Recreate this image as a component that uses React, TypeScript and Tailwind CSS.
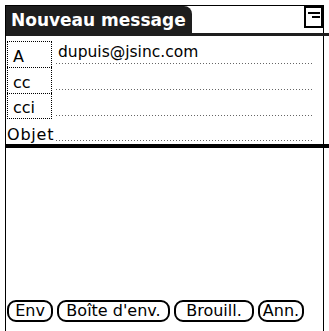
const font = { fontFamily: '"DejaVu Sans", Verdana, sans-serif' };

function DottedRule() {
  return (
    <div className="h-px w-full bg-[linear-gradient(to_right,#666_1px,transparent_1px)] bg-[length:3px_1px] bg-repeat-x" />
  );
}

function MenuIcon() {
  return (
    <svg width="19" height="22" viewBox="0 0 19 22" className="shrink-0 block">
      <rect x="1" y="1" width="17" height="20" fill="white" stroke="black" strokeWidth="2" />
      <rect x="4" y="6" width="12" height="2" fill="black" />
      <rect x="8" y="10" width="8" height="2" fill="black" />
    </svg>
  );
}

function AddressRow({ label, value, last }: { label: string; value?: string; last?: boolean }) {
  return (
    <div className="flex h-[26px]">
      <div
        className={`w-[45px] border-x border-t border-dotted border-black pl-[5px] flex items-center pt-[4px] text-[16px] leading-none ${
          last ? 'border-b' : ''
        }`}
      >
        {label}
      </div>
      <div className="ml-[4px] mr-[9px] flex-1 flex flex-col justify-end">
        <div className="pl-[2px] pb-[3px] text-[15.5px] leading-none">{value}</div>
        <DottedRule />
        <div className="h-[3px]" />
      </div>
    </div>
  );
}

export default function App() {
  return (
    <div className="w-[329px] h-[331px] bg-white overflow-hidden text-black" style={font}>
      <div className="ml-[5px] mt-[5px] w-[319px] h-[326px] border-l border-t border-r border-black flex flex-col">
        {/* title bar */}
        <div className="flex items-start justify-between h-[27px]">
          <div className="w-[186px] h-[27px] bg-[#1e1e1e] rounded-tr-[8px] flex items-end pl-[5px] pb-[4px]">
            <span className="text-white font-bold text-[17px] leading-none">Nouveau message</span>
          </div>
          <MenuIcon />
        </div>
        <div className="h-[3px] bg-[#1e1e1e] -mr-[6px]" />

        {/* address fields */}
        <div className="pt-[5px] pl-[1px]">
          <AddressRow label="A" value="dupuis@jsinc.com" />
          <AddressRow label="cc" />
          <AddressRow label="cci" last />
          <div className="flex h-[25px]">
            <div className="w-[49px] flex items-center pt-[6px] text-[16px] leading-none tracking-[0.8px]">
              Objet
            </div>
            <div className="mr-[9px] flex-1 flex flex-col justify-end">
              <DottedRule />
              <div className="h-[3px]" />
            </div>
          </div>
        </div>
        <div className="h-[4px] bg-black -mr-[6px]" />

        <div className="flex-1" />

        {/* buttons */}
        <div className="flex gap-[4px] ml-[1px] mb-[9px] text-[16px] leading-none">
          <button className="w-[46px] h-[22px] border-2 border-black rounded-[9px] flex items-center justify-center">
            Env
          </button>
          <button className="w-[113px] h-[22px] border-2 border-black rounded-[9px] flex items-center justify-center">
            Boîte d'env.
          </button>
          <button className="w-[80px] h-[22px] border-2 border-black rounded-[9px] flex items-center justify-center">
            Brouill.
          </button>
          <button className="w-[46px] h-[22px] border-2 border-black rounded-[9px] flex items-center justify-center">
            Ann.
          </button>
        </div>
      </div>
    </div>
  );
}
